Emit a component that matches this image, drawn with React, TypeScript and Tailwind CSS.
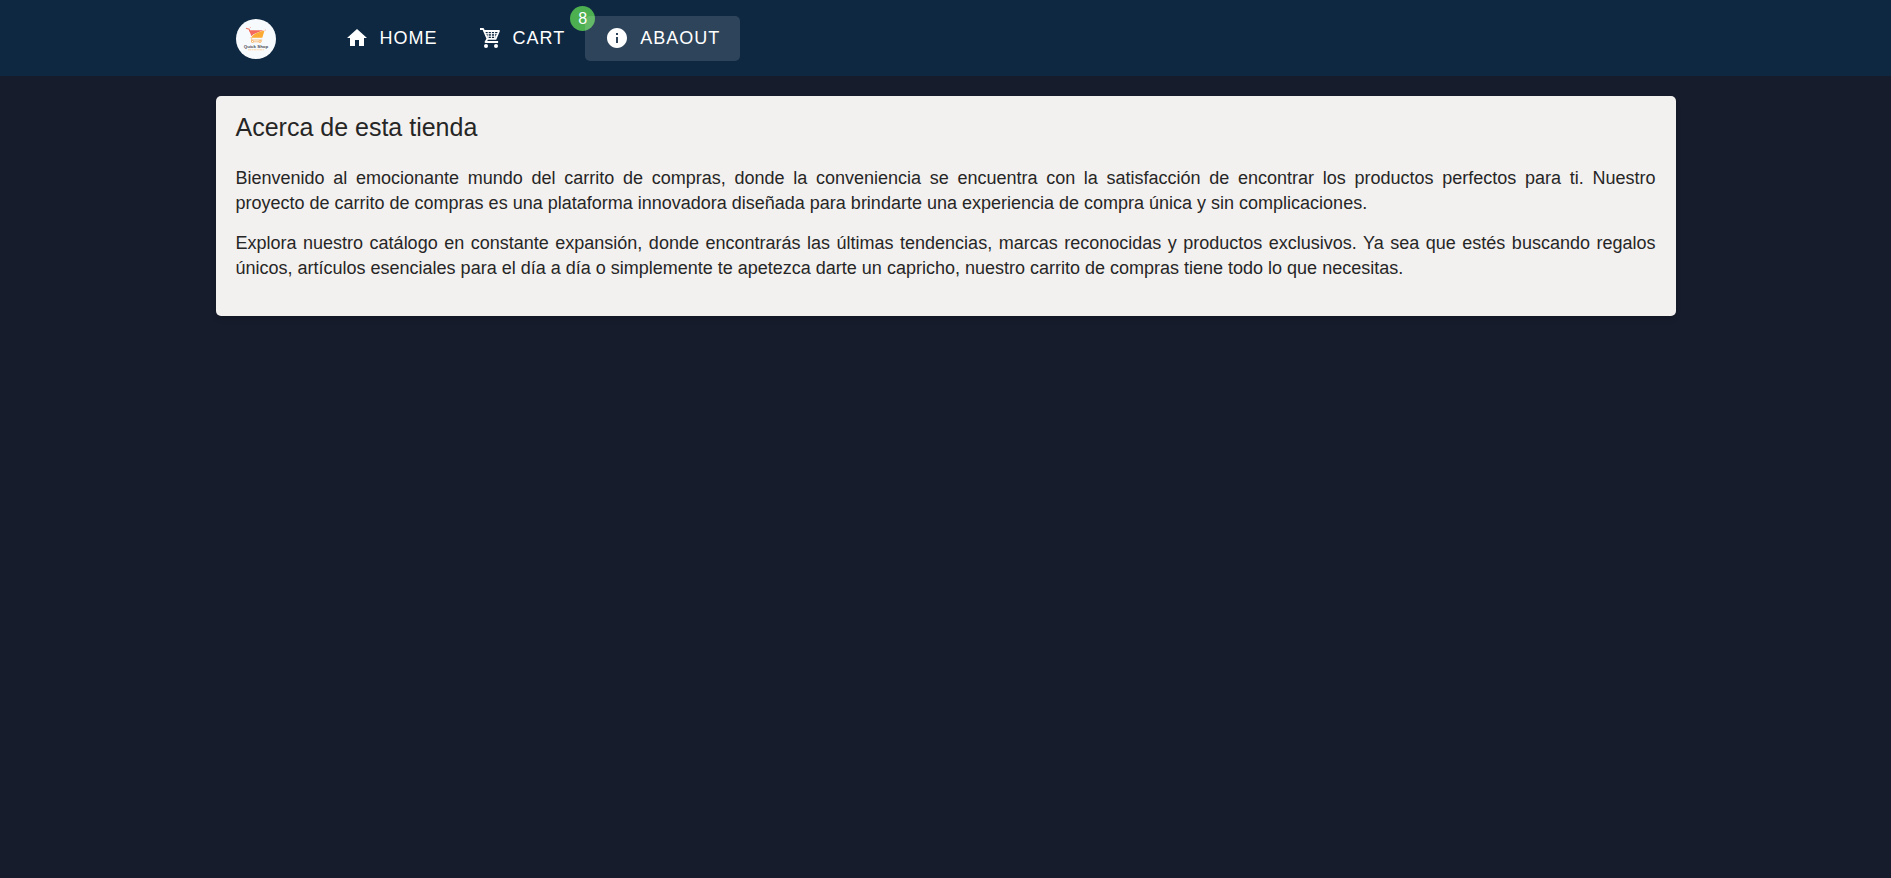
import type { ReactNode } from "react";

function HomeIcon() {
  return (
    <svg viewBox="0 0 24 24" className="size-6 shrink-0" fill="currentColor" aria-hidden="true">
      <path d="M10 20v-6h4v6h5v-8h3L12 3 2 12h3v8z" />
    </svg>
  );
}

function CartIcon() {
  return (
    <svg viewBox="0 0 24 24" className="size-6 shrink-0" aria-hidden="true">
      <g fill="none" stroke="currentColor" strokeWidth="1.8" strokeLinejoin="round">
        <path d="M2 3h3.2l4.3 9.8-2 3.2h12.6" />
        <path d="M5.8 5H21l-3.4 7.8H9.2" />
      </g>
      <path
        d="M7.500 7.700H20M8.500 10.200H19M10.200 5v8M13.400 5v8M16.600 5v8"
        fill="none"
        stroke="currentColor"
        strokeWidth="1"
      />
      <circle cx="8" cy="20" r="2" fill="currentColor" />
      <circle cx="18" cy="20" r="2" fill="currentColor" />
    </svg>
  );
}

function InfoIcon() {
  return (
    <svg viewBox="0 0 24 24" className="size-6 shrink-0" fill="currentColor" aria-hidden="true">
      <path d="M12 2C6.48 2 2 6.48 2 12s4.48 10 10 10 10-4.48 10-10S17.52 2 12 2zm1 15h-2v-6h2v6zm0-8h-2V7h2v2z" />
    </svg>
  );
}

function Logo() {
  return (
    <a href="#" aria-label="Quick Shop" className="mr-[49px] block size-10 shrink-0">
      <svg viewBox="0 0 40 40" className="size-10">
        <circle cx="20" cy="20" r="20" fill="#f7fafd" />
        <path d="M10 9.300l3.200 1 .6 2" fill="none" stroke="#f4775f" strokeWidth="1.1" />
        <path d="M13 11.200h14.500l-6 2.200c-2.500 1-4.500 2-6 3.800z" fill="#f4695c" />
        <path d="M28.500 11.500l-2.200 7.200H15.500c1.500-3.700 6.500-5.700 13-7.200z" fill="#fbab33" />
        <path d="M15 18l.8 3h10.400M15.500 21v1.800h9.500V21" fill="none" stroke="#f9b668" strokeWidth=".8" />
        <circle cx="16.500" cy="22.500" r="1" fill="#fff" stroke="#f5a54a" strokeWidth=".8" />
        <circle cx="24" cy="22.500" r="1" fill="#fff" stroke="#f5a54a" strokeWidth=".8" />
        <circle cx="29.300" cy="11" r=".6" fill="#f4a08e" />
        <circle cx="14.300" cy="8.600" r=".5" fill="#f4a08e" />
        <text
          x="20"
          y="28.500"
          textAnchor="middle"
          fontSize="4.400"
          fontWeight="700"
          fontFamily="Liberation Sans, sans-serif"
          fill="#4a4a52"
        >
          Quick Shop
        </text>
        <path d="M12 30.800h16" stroke="#fbd3a4" strokeWidth="1" strokeDasharray="3 .6 1.500 .5" />
      </svg>
    </a>
  );
}

type NavItemProps = { icon: ReactNode; label: string; active?: boolean; badge?: number };

function NavItem({ icon, label, active = false, badge }: NavItemProps) {
  return (
    <a
      href="#"
      aria-current={active ? "page" : undefined}
      className={
        active
          ? "relative flex h-[45px] items-center gap-[11px] rounded-[5px] bg-white/13 px-5 pb-0.5"
          : "relative flex h-[45px] items-center gap-[11px] rounded-[5px] px-5 pb-0.5"
      }
    >
      {icon}
      <span className="text-lg tracking-[1px] uppercase">{label}</span>
      {badge !== undefined && (
        <span className="absolute -top-2.5 -right-2.5 flex size-[25px] items-center justify-center rounded-full bg-[#4caf50] text-base">
          {badge}
        </span>
      )}
    </a>
  );
}

export default function App() {
  return (
    <div className="min-h-screen bg-[#171c2c] font-['Liberation_Sans',Arial,sans-serif]">
      <header className="bg-[#0e2841] text-white">
        <nav className="mx-auto flex h-[76px] max-w-[1460px] items-center px-5 pt-px">
          <Logo />
          <NavItem icon={<HomeIcon />} label="Home" />
          <NavItem icon={<CartIcon />} label="Cart" badge={8} />
          <NavItem icon={<InfoIcon />} label="Abaout" active />
        </nav>
      </header>
      <main className="py-5">
        <article className="mx-auto max-w-[1460px] rounded-[5px] bg-[#f3f1ef] px-5 pt-5 pb-[35px] text-[#262626] shadow-md">
          <h1 className="mb-7 text-[25px] leading-[22px]">Acerca de esta tienda</h1>
          <div className="flex flex-col gap-[15px] text-justify text-lg leading-[25px]">
            <p>
              Bienvenido al emocionante mundo del carrito de compras, donde la conveniencia se encuentra con la
              satisfacción de encontrar los productos perfectos para ti. Nuestro{" "}
              <span className="whitespace-nowrap">proyecto de</span> carrito de compras es una plataforma innovadora
              diseñada para brindarte una experiencia de compra única y sin complicaciones.
            </p>
            <p>
              Explora nuestro catálogo en constante expansión, donde encontrarás las últimas tendencias, marcas
              reconocidas y productos exclusivos. Ya sea que estés buscando regalos únicos, artículos esenciales para
              el día a día o simplemente te apetezca darte un capricho, nuestro carrito de compras tiene todo lo que
              necesitas.
            </p>
          </div>
        </article>
      </main>
    </div>
  );
}
